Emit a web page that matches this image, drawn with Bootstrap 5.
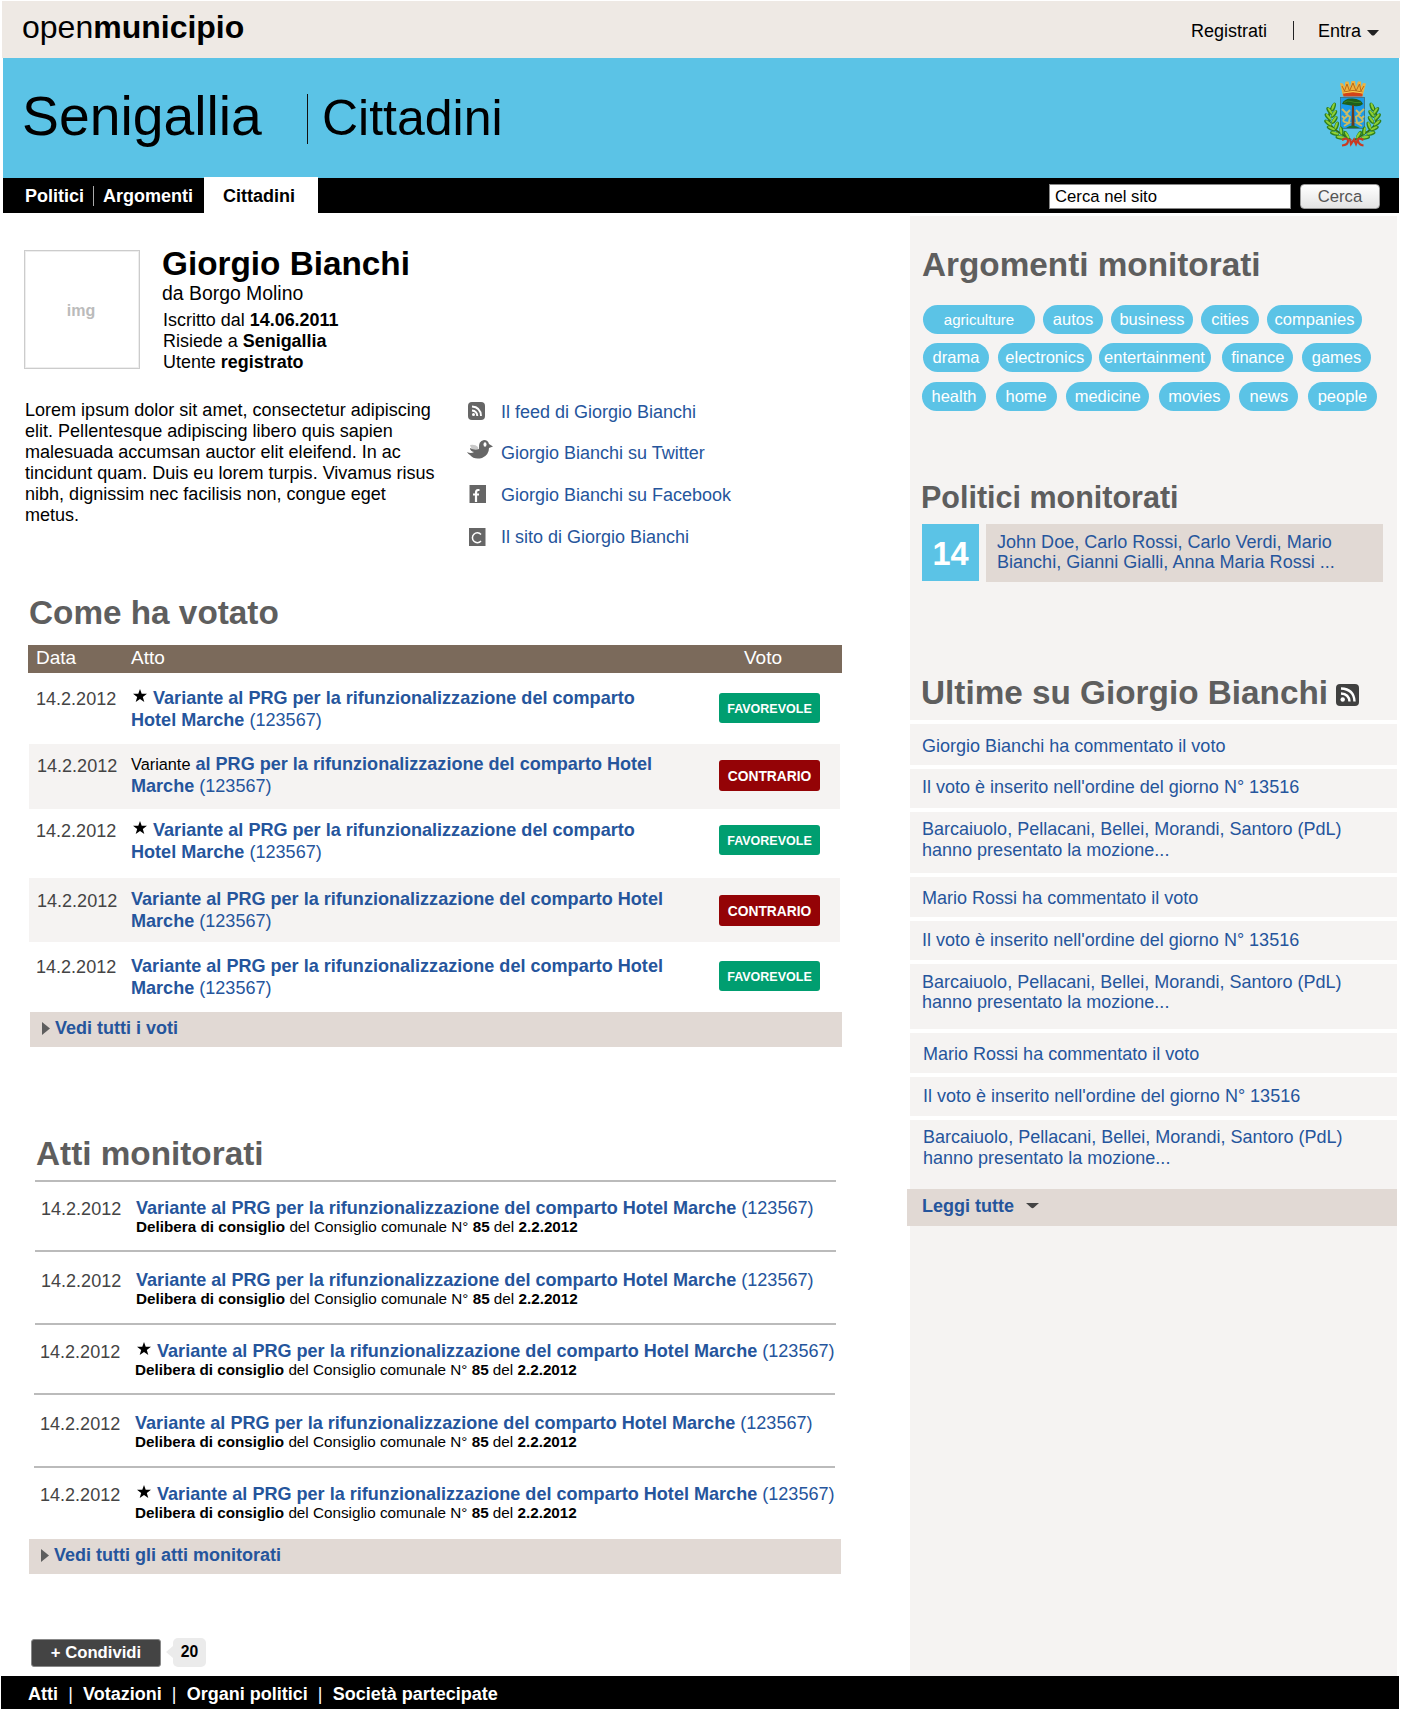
<!DOCTYPE html>
<html lang="it">
<head>
<meta charset="utf-8">
<meta name="viewport" content="width=device-width, initial-scale=1">
<title>openmunicipio - Senigallia - Giorgio Bianchi</title>
<link href="https://cdn.jsdelivr.net/npm/bootstrap@5.3.0/dist/css/bootstrap.min.css" rel="stylesheet">
<style>
  body { font-family: "Liberation Sans", Arial, sans-serif; font-size: 18px; line-height: 20px; color: #000; background: #fff; }
  a { color: #25559c; text-decoration: none; }
  svg { display: block; flex: none; }
  .om-page { width: 1412px; height: 1720px; padding-top: 1px; overflow: hidden; }
  .om-top { width: 1398px; height: 57px; margin-left: 2px; padding: 0 20px 0 20px; background: #eee9e4; }
  .om-logo { font-size: 32px; line-height: 36px; padding-top: 8px; color: #000; }
  .om-user { padding-top: 20px; }
  .om-user a { color: #000; }
  .om-user .om-sep { width: 1px; height: 19px; background: #222; margin: 0 24px 0 26px; }
  .om-user svg { margin: 9px 1px 0 6px; }
  .om-hero { width: 1396px; height: 120px; margin-left: 3px; padding: 0 16px 0 19px; background: #5bc3e6; }
  .om-city { font-size: 55.3px; line-height: 63px; width: 285px; padding-top: 27px; font-weight: 400; }
  .om-area { font-size: 50px; line-height: 56px; margin-top: 36px; height: 50px; padding-left: 14px; border-left: 1px solid #111; }
  .om-area span { display: block; margin-top: -4px; }
  .om-crest { margin-top: 22px; }
  .om-nav { width: 1396px; height: 35px; margin-left: 3px; padding: 0 19px 0 22px; background: #000; font-weight: 700; }
  .om-nav .om-link { color: #fff; padding-top: 8px; }
  .om-nav .om-vr { width: 1px; height: 20px; background: #aaa; margin: 8px 9px 0 9px; }
  .om-tab { width: 114px; height: 36px; margin: -1px 0 0 11px; padding: 9px 0 0 19px; background: #fff; color: #000; }
  .om-find { margin-top: 6px; gap: 9px; }
  .om-find .om-input { width: 242px; height: 25px; border: 1px solid #888; background: #fff; padding: 0 5px; font-size: 16.7px; border-radius: 0; color: #000; }
  .om-find .om-input::placeholder { color: #000; opacity: 1; }
  .om-find .om-go { width: 80px; height: 25px; padding: 0; border: 1px solid #999; border-radius: 4px; background: linear-gradient(#fff, #e3e3e3); color: #555; font-size: 16.7px; line-height: 23px; }
  .om-main { height: 1463px; }
  .om-left { width: 910px; flex: none; }
  .om-side { width: 487px; margin-top: 3px; padding: 30px 0 0 12px; background: #f5f3f2; }
  .om-title { font-size: 33.3px; line-height: 38px; font-weight: 700; color: #5e5e5e; margin: 0; white-space: nowrap; }

  .om-profile { height: 187px; padding: 37px 0 0 24px; }
  .om-avatar { width: 116px; height: 119px; border: 1px solid #ccc; outline: 1px solid #eee; outline-offset: -2px; color: #bbb; font-size: 16px; font-weight: 700; padding: 2px 2px 0 0; }
  .om-who { margin: -5px 0 0 22px; }
  .om-who h1 { font-size: 33.3px; line-height: 37px; font-weight: 700; margin: 0; }
  .om-from { font-size: 19.4px; line-height: 21px; margin-top: 1px; }
  .om-facts { font-size: 17.95px; line-height: 21px; margin-top: 6px; padding-left: 1px; }
  .om-about { height: 194px; padding-left: 25px; }
  .om-bio { width: 442px; font-size: 18.05px; line-height: 20.9px; white-space: nowrap; }
  .om-contacts { margin-top: -9px; }
  .om-contacts a { height: 41.7px; gap: 0; }
  .om-contacts a:nth-child(2) { padding-bottom: 1.5px; }
  .om-ico { width: 34px; flex: none; }

  .om-votes { padding-left: 28px; }
  .om-votes .om-title { height: 51px; padding-left: 1px; }
  .om-thead { width: 814px; height: 28px; background: #7b6a5b; color: #fff; font-size: 19px; line-height: 22px; padding: 2px 0 0 8px; }
  .om-thead :nth-child(1) { width: 95px; } .om-thead :nth-child(2) { width: 613px; }
  .om-vote { width: 811px; margin-left: 1px; height: var(--h); }
  .om-date { color: #444; flex: none; font-size: 18.05px; }
  .om-act { font-size: 18.07px; }
  .om-vote .om-date { width: 102px; padding: calc(var(--p) + 2px) 0 0 7px; }
  .om-vote .om-act { width: 588px; padding-top: var(--p); line-height: 22px; }
  .om-vote:nth-child(even) { background: #f5f3f2; }
  .om-vote:nth-child(even) .om-date { padding-left: 8px; padding-top: calc(var(--p) + 3px); }
  .om-vote:nth-child(1) { --h: 71px; --p: 14px; --b: 20px; }
  .om-vote:nth-child(2) { --h: 65px; --p: 9px; --b: 16px; }
  .om-vote:nth-child(3) { --h: 69px; --p: 10px; --b: 16px; }
  .om-vote:nth-child(4) { --h: 64px; --p: 10px; --b: 17px; }
  .om-vote:nth-child(5) { --h: 70px; --p: 13px; --b: 19px; }
  .om-plain { font-size: 16.3px; color: #000; }
  .om-star { display: inline-block; vertical-align: 2px; margin: 0 6px 0 2px; }
  .om-yes, .om-no { width: 101px; height: 30px; margin-top: var(--b); border-radius: 3px; color: #fff; font-weight: 700; text-align: center; white-space: nowrap; }
  .om-yes { background: #009e70; font-size: 12.5px; line-height: 32px; }
  .om-no { background: #940306; font-size: 13.8px; line-height: 33px; height: 31px; }
  .om-more { width: 812px; height: 35px; background: #e1d9d4; font-weight: 700; padding: 0 0 3px 12px; gap: 5px; }
  .om-votes .om-more { margin-left: 2px; }

  .om-acts { padding: 88px 0 0 29px; }
  .om-acts .om-title { height: 45px; padding-left: 7px; }
  .om-item { width: 801px; margin-left: 6px; border-top: 2px solid #bbb; height: var(--h); padding-top: var(--p); }
  .om-item:nth-child(1) { --h: 70px; --p: 15px; }
  .om-item:nth-child(2) { --h: 73px; --p: 17px; }
  .om-item:nth-child(3) { --h: 70px; --p: 15px; }
  .om-item:nth-child(4) { --h: 73px; --p: 17px; }
  .om-item:nth-child(5) { --h: 73px; --p: 15px; }
  .om-item:nth-child(n+4) { margin-left: 5px; }
  .om-item .om-date { width: 101px; padding: 2px 0 0 6px; }
  .om-item:nth-child(3) .om-date { width: 100px; padding-left: 5px; }
  .om-item .om-act { line-height: 22px; white-space: nowrap; }
  .om-sub { font-size: 15.25px; line-height: 15px; color: #000; }
  .om-share { padding: 65px 0 0 31px; }
  .om-sharebtn { width: 130px; height: 28px; border: 1px solid #888; border-radius: 3px; background: #444; color: #fff; font-size: 16.7px; line-height: 26px; font-weight: 700; padding: 0; }
  .om-arrow { margin: 7px 0 0 5px; }
  .om-count { width: 33px; height: 29px; margin-top: -1px; border-radius: 5px; background: #ebebeb; font-size: 15.7px; line-height: 28px; font-weight: 700; text-align: center; }
  .om-foot { width: 1398px; height: 33px; margin-left: 1px; padding: 0 0 0 27px; background: #000; color: #fff; font-weight: 700; line-height: 37px; white-space: nowrap; }
  .om-foot a { color: #fff; }
  .om-foot i { font-style: normal; font-weight: 400; width: 25px; text-align: center; }

  .om-tags { margin-top: 21px; margin-left: 1px; }
  .om-tagrow { height: 29px; }
  .om-tagrow span { height: 29px; border-radius: 15px; background: #5bc3e6; color: #fff; font-size: 16.5px; line-height: 29px; text-align: center; white-space: nowrap; }
  .om-t1 { width: 439px; margin-bottom: 9px; } .om-t2 { width: 448px; margin-bottom: 10px; } .om-t3 { width: 455px; margin-left: -1px; }
  .om-t1 span:nth-child(1) { width: 112px; font-size: 15.1px; } .om-t1 span:nth-child(2) { width: 60px; } .om-t1 span:nth-child(3) { width: 82px; } .om-t1 span:nth-child(4) { width: 58px; } .om-t1 span:nth-child(5) { width: 95px; }
  .om-t2 span:nth-child(1) { width: 66px; } .om-t2 span:nth-child(2) { width: 94px; } .om-t2 span:nth-child(3) { width: 112px; margin: 0 3px 0 -2px; } .om-t2 span:nth-child(4) { width: 71px; } .om-t2 span:nth-child(5) { width: 69px; }
  .om-t3 span:nth-child(1) { width: 64px; } .om-t3 span:nth-child(2) { width: 61px; } .om-t3 span:nth-child(3) { width: 83px; } .om-t3 span:nth-child(4) { width: 71px; } .om-t3 span:nth-child(5) { width: 59px; } .om-t3 span:nth-child(6) { width: 69px; }
  .om-small { font-size: 30.5px; line-height: 34px; margin: 69px 0 10px -1px; }
  .om-num { width: 57px; height: 57px; background: #5bc3e6; color: #fff; font-size: 32.5px; line-height: 60px; font-weight: 700; text-align: center; }
  .om-names { width: 397px; height: 58px; margin-left: 7px; padding: 8px 0 0 11px; background: #e1d9d4; white-space: nowrap; font-size: 18.05px; }
  .om-latest { margin-top: 92px; margin-left: -1px; height: 46px; gap: 8px; }
  .om-latest svg { margin-top: 10px; }
  .om-news { margin-left: -12px; font-size: 18.03px; }
  .om-news a { display: block; height: var(--h); border-top: 4px solid #fff; padding: var(--p) 0 0 12px; white-space: nowrap; }
  .om-news a:nth-child(n+7) { padding-left: 13px; }
  .om-news a:nth-child(1) { --h: 45px; --p: 12px; } .om-news a:nth-child(2) { --h: 43px; --p: 8px; }
  .om-news a:nth-child(3) { --h: 65px; --p: 7px; line-height: 21px; } .om-news a:nth-child(4) { --h: 44px; --p: 11px; }
  .om-news a:nth-child(5) { --h: 43px; --p: 9px; } .om-news a:nth-child(6) { --h: 69px; --p: 8px; }
  .om-news a:nth-child(7) { --h: 44px; --p: 11px; } .om-news a:nth-child(8) { --h: 43px; --p: 9px; }
  .om-news a:nth-child(9) { --h: 73px; --p: 7px; line-height: 21px; }
  .om-all { margin-left: -15px; width: 490px; height: 37px; background: #e1d9d4; font-weight: 700; padding: 0 0 4px 15px; gap: 12px; }
</style>
</head>
<body>
<svg width="0" height="0" class="position-absolute" aria-hidden="true">
  <symbol id="star" viewBox="0 0 14 13"><path d="M7 0 8.7 4.7 14 4.8 9.8 8 11.3 13 7 10.1 2.7 13 4.2 8 0 4.8 5.3 4.7Z"/></symbol>
  <symbol id="leaf" viewBox="-6 -3 12 6" overflow="visible"><ellipse rx="4.6" ry="2" fill="#2f7f1c"/><ellipse cx=".3" cy="-.5" rx="3.800" ry="1.100" fill="#8fd034"/></symbol>
</svg>
<div class="om-page">
  <header>
    <div class="om-top d-flex justify-content-between">
      <a class="om-logo" href="#">open<b>municipio</b></a>
      <div class="om-user d-flex">
        <a href="#">Registrati</a><span class="om-sep"></span><a href="#">Entra</a>
        <svg width="12" height="6"><path d="M0 0H12L7.5 5Q6 6 4.500 5Z" fill="#222"/></svg>
      </div>
    </div>
    <div class="om-hero d-flex">
      <div class="om-city">Senigallia</div>
      <div class="om-area"><span>Cittadini</span></div>
      <svg class="om-crest ms-auto" width="60" height="68" viewBox="0 0 60 68">
        <path d="M20 16 17 3 20 3.500 21.500 7 22.500 1.500H25.500L27 7 28.500 1H32L33 7 35 1.500H38L38.500 7 40 3 43 3.500 39.500 16Z" fill="#eeb23f"/>
        <path d="M19 6 21.500 11 24 4 26.500 11 30 3 33 11 36.500 4 38 11 41 6M20.500 12Q30 9 39.500 12" fill="none" stroke="#b96a18" stroke-width="1"/>
        <path d="M20 13.500Q30 11 39.500 13.500V16.500H20.500Z" fill="#d2441a"/><path d="M20.500 13Q30 10 39.500 13" fill="none" stroke="#ffd855" stroke-width=".8"/>
        <rect x="17.500" y="17.500" width="24" height="31" fill="#1a9be8" stroke="#3d6d7d" stroke-width=".8"/>
        <path d="M19 24Q21 18 29.500 18.500T40 24Q37 27 31 26T19 24Z" fill="#1d5f1c"/>
        <path d="M21 22.500Q25 20 28 21.500T38 22.500" fill="none" stroke="#3f8f28" stroke-width=".8"/>
        <path d="M29 25H31L31.500 46H28.500Z" fill="#6b3a1a"/>
        <path d="M23 48Q29 43 37 48Z" fill="#237129"/>
        <g fill="none" stroke="#cdbb62" stroke-width="1.900"><path d="M19 29 22 32Q27 34 22 38T26 43L21 46M27 30 23 34 27 37 26 42M19 36 22 39"/><path d="M41 29 38 32Q33 34 38 38T34 43L39 46M33 30 37 34 33 37 34 42M41 36 38 39"/></g>
        <g id="branch">
          <path d="M10 25Q0 42 14 51T28 60" fill="none" stroke="#326c14" stroke-width="2"/>
          <g transform="translate(10.500 27) rotate(-70)"><use href="#leaf" x="-6" y="-3" width="12" height="6"/></g>
          <g transform="translate(6.500 31) rotate(55)"><use href="#leaf" x="-6" y="-3" width="12" height="6"/></g>
          <g transform="translate(11 34) rotate(-55)"><use href="#leaf" x="-6" y="-3" width="12" height="6"/></g>
          <g transform="translate(5 37) rotate(50)"><use href="#leaf" x="-6" y="-3" width="12" height="6"/></g>
          <g transform="translate(11.500 40) rotate(-55)"><use href="#leaf" x="-6" y="-3" width="12" height="6"/></g>
          <g transform="translate(5 43) rotate(40)"><use href="#leaf" x="-6" y="-3" width="12" height="6"/></g>
          <g transform="translate(13.500 46) rotate(-70)"><use href="#leaf" x="-6" y="-3" width="12" height="6"/></g>
          <g transform="translate(8 48.500) rotate(25)"><use href="#leaf" x="-6" y="-3" width="12" height="6"/></g>
          <g transform="translate(18.500 51) rotate(-100)"><use href="#leaf" x="-6" y="-3" width="12" height="6"/></g>
          <g transform="translate(11.500 53.500) rotate(15)"><use href="#leaf" x="-6" y="-3" width="12" height="6"/></g>
          <g transform="translate(23.500 55) rotate(60)"><use href="#leaf" x="-6" y="-3" width="12" height="6"/></g>
          <g transform="translate(17 57.500) rotate(10)"><use href="#leaf" x="-6" y="-3" width="12" height="6"/></g>
        </g>
        <use href="#branch" transform="matrix(-1 0 0 1 59.500 0)"/>
        <path d="M19 60Q25 57 25 61T19 65.500M27 59 28 64 31 59.500 33 64 35 59M40.500 60Q34 57 35 61T40.500 65.500" fill="none" stroke="#c93a22" stroke-width="2.200"/>
      </svg>
    </div>
    <nav class="om-nav d-flex">
      <a class="om-link" href="#">Politici</a><span class="om-vr"></span><a class="om-link" href="#">Argomenti</a>
      <a class="om-tab" href="#">Cittadini</a>
      <form class="om-find d-flex ms-auto"><input class="om-input" type="text" placeholder="Cerca nel sito"><button class="om-go btn" type="button">Cerca</button></form>
    </nav>
  </header>

  <main class="om-main d-flex">
    <div class="om-left">
      <section class="om-profile d-flex">
        <div class="om-avatar d-flex align-items-center justify-content-center">img</div>
        <div class="om-who">
          <h1>Giorgio Bianchi</h1>
          <div class="om-from">da Borgo Molino</div>
          <div class="om-facts">Iscritto dal <b>14.06.2011</b><br>Risiede a <b>Senigallia</b><br>Utente <b>registrato</b></div>
        </div>
      </section>
      <section class="om-about d-flex">
        <div class="om-bio">Lorem ipsum dolor sit amet, consectetur adipiscing<br>elit. Pellentesque adipiscing libero quis sapien<br>malesuada accumsan auctor elit eleifend. In ac<br>tincidunt quam. Duis eu lorem turpis. Vivamus risus<br>nibh, dignissim nec facilisis non, congue eget<br>metus.</div>
        <div class="om-contacts">
          <a class="d-flex align-items-center" href="#"><span class="om-ico"><svg width="27" height="19" viewBox="0 0 27 19"><rect x="1" width="17" height="18" rx="4" fill="#666"/><g fill="none" stroke="#fff" stroke-width="1.900"><path d="M5 4.500Q13.500 5 14 14M5 8.500Q10 9 10.300 14"/></g><circle cx="6.500" cy="12.500" r="1.500" fill="#fff"/></svg></span>Il feed di Giorgio Bianchi</a>
          <a class="d-flex align-items-center" href="#"><span class="om-ico"><svg width="27" height="30" viewBox="0 0 27 30"><path d="M3 7Q8 6 11 9L12 13H8Q4 11 3 7Z" fill="#c9c9c9"/><path d="M0 14Q4 16 7 14Q3 13 3 10Q8 13 12 11Q11 3 17 2Q21 2 22 6L26 8.500 22 10Q22 17 15 20Q7 22 3 17Q1 16 0 14Z" fill="#666"/><ellipse cx="18" cy="6.500" rx="1.500" ry="2.200" fill="#fff"/></svg></span>Giorgio Bianchi su Twitter</a>
          <a class="d-flex align-items-center" href="#"><span class="om-ico"><svg width="27" height="20"><rect x="2.500" width="16.500" height="18" fill="#666"/><path d="M12.500 5H11Q9 5 9 8V17M6 9.500H12" fill="none" stroke="#fff" stroke-width="2.200"/></svg></span>Giorgio Bianchi su Facebook</a>
          <a class="d-flex align-items-center" href="#"><span class="om-ico"><svg width="27" height="18"><rect x="2" width="16.500" height="18" fill="#666"/><path d="M14 6.500A4.900 4.900 0 1 0 14 13" fill="none" stroke="#fff" stroke-width="1.500"/></svg></span>Il sito di Giorgio Bianchi</a>
        </div>
      </section>

      <section class="om-votes">
        <h2 class="om-title">Come ha votato</h2>
        <div class="om-thead d-flex"><span>Data</span><span>Atto</span><span>Voto</span></div>
        <div>
          <div class="om-vote d-flex"><div class="om-date">14.2.2012</div><div class="om-act"><svg class="om-star" width="14" height="13"><use href="#star"/></svg><a href="#"><b>Variante al PRG per la rifunzionalizzazione del comparto<br>Hotel Marche</b> (123567)</a></div><div class="om-yes">FAVOREVOLE</div></div>
          <div class="om-vote d-flex"><div class="om-date">14.2.2012</div><div class="om-act"><span class="om-plain">Variante</span> <a href="#"><b>al PRG per la rifunzionalizzazione del comparto Hotel<br>Marche</b> (123567)</a></div><div class="om-no">CONTRARIO</div></div>
          <div class="om-vote d-flex"><div class="om-date">14.2.2012</div><div class="om-act"><svg class="om-star" width="14" height="13"><use href="#star"/></svg><a href="#"><b>Variante al PRG per la rifunzionalizzazione del comparto<br>Hotel Marche</b> (123567)</a></div><div class="om-yes">FAVOREVOLE</div></div>
          <div class="om-vote d-flex"><div class="om-date">14.2.2012</div><div class="om-act"><a href="#"><b>Variante al PRG per la rifunzionalizzazione del comparto Hotel<br>Marche</b> (123567)</a></div><div class="om-no">CONTRARIO</div></div>
          <div class="om-vote d-flex"><div class="om-date">14.2.2012</div><div class="om-act"><a href="#"><b>Variante al PRG per la rifunzionalizzazione del comparto Hotel<br>Marche</b> (123567)</a></div><div class="om-yes">FAVOREVOLE</div></div>
        </div>
        <a class="om-more d-flex align-items-center" href="#"><svg width="8" height="13"><path d="M0 0 8 6.500 0 13Z" fill="#5e5e5e"/></svg>Vedi tutti i voti</a>
      </section>

      <section class="om-acts">
        <h2 class="om-title">Atti monitorati</h2>
        <div>
          <div class="om-item d-flex"><div class="om-date">14.2.2012</div><div class="om-act"><a href="#"><b>Variante al PRG per la rifunzionalizzazione del comparto Hotel Marche</b> (123567)</a><div class="om-sub"><b>Delibera di consiglio</b> del Consiglio comunale N° <b>85</b> del <b>2.2.2012</b></div></div></div>
          <div class="om-item d-flex"><div class="om-date">14.2.2012</div><div class="om-act"><a href="#"><b>Variante al PRG per la rifunzionalizzazione del comparto Hotel Marche</b> (123567)</a><div class="om-sub"><b>Delibera di consiglio</b> del Consiglio comunale N° <b>85</b> del <b>2.2.2012</b></div></div></div>
          <div class="om-item d-flex"><div class="om-date">14.2.2012</div><div class="om-act"><svg class="om-star" width="14" height="13"><use href="#star"/></svg><a href="#"><b>Variante al PRG per la rifunzionalizzazione del comparto Hotel Marche</b> (123567)</a><div class="om-sub"><b>Delibera di consiglio</b> del Consiglio comunale N° <b>85</b> del <b>2.2.2012</b></div></div></div>
          <div class="om-item d-flex"><div class="om-date">14.2.2012</div><div class="om-act"><a href="#"><b>Variante al PRG per la rifunzionalizzazione del comparto Hotel Marche</b> (123567)</a><div class="om-sub"><b>Delibera di consiglio</b> del Consiglio comunale N° <b>85</b> del <b>2.2.2012</b></div></div></div>
          <div class="om-item d-flex"><div class="om-date">14.2.2012</div><div class="om-act"><svg class="om-star" width="14" height="13"><use href="#star"/></svg><a href="#"><b>Variante al PRG per la rifunzionalizzazione del comparto Hotel Marche</b> (123567)</a><div class="om-sub"><b>Delibera di consiglio</b> del Consiglio comunale N° <b>85</b> del <b>2.2.2012</b></div></div></div>
        </div>
        <a class="om-more d-flex align-items-center" href="#"><svg width="8" height="13"><path d="M0 0 8 6.500 0 13Z" fill="#5e5e5e"/></svg>Vedi tutti gli atti monitorati</a>
      </section>

      <div class="om-share d-flex">
        <button class="om-sharebtn btn" type="button">+ Condividi</button>
        <svg class="om-arrow" width="7" height="12"><path d="M7 0V12L0 6Z" fill="#ebebeb"/></svg>
        <div class="om-count">20</div>
      </div>
    </div>

    <aside class="om-side">
      <h2 class="om-title">Argomenti monitorati</h2>
      <div class="om-tags">
        <div class="om-tagrow om-t1 d-flex justify-content-between"><span>agriculture</span><span>autos</span><span>business</span><span>cities</span><span>companies</span></div>
        <div class="om-tagrow om-t2 d-flex justify-content-between"><span>drama</span><span>electronics</span><span>entertainment</span><span>finance</span><span>games</span></div>
        <div class="om-tagrow om-t3 d-flex justify-content-between"><span>health</span><span>home</span><span>medicine</span><span>movies</span><span>news</span><span>people</span></div>
      </div>
      <h2 class="om-title om-small">Politici monitorati</h2>
      <div class="d-flex">
        <div class="om-num">14</div>
        <a class="om-names" href="#">John Doe, Carlo Rossi, Carlo Verdi, Mario<br>Bianchi, Gianni Gialli, Anna Maria Rossi ...</a>
      </div>
      <div class="om-latest d-flex"><h2 class="om-title">Ultime su Giorgio Bianchi</h2>
        <svg width="23" height="22" viewBox="0 0 23 22"><rect width="23" height="22" rx="4" fill="#404040"/><g fill="none" stroke="#fff" stroke-width="2.400"><path d="M5 4.500Q18 5 18.500 17.500M5 9.500Q13 10 13.500 17.500"/></g><circle cx="6.700" cy="15.500" r="2.200" fill="#fff"/></svg>
      </div>
      <div class="om-news">
        <a href="#">Giorgio Bianchi ha commentato il voto</a>
        <a href="#">Il voto è inserito nell'ordine del giorno N° 13516</a>
        <a href="#">Barcaiuolo, Pellacani, Bellei, Morandi, Santoro (PdL)<br>hanno presentato la mozione...</a>
        <a href="#">Mario Rossi ha commentato il voto</a>
        <a href="#">Il voto è inserito nell'ordine del giorno N° 13516</a>
        <a href="#">Barcaiuolo, Pellacani, Bellei, Morandi, Santoro (PdL)<br>hanno presentato la mozione...</a>
        <a href="#">Mario Rossi ha commentato il voto</a>
        <a href="#">Il voto è inserito nell'ordine del giorno N° 13516</a>
        <a href="#">Barcaiuolo, Pellacani, Bellei, Morandi, Santoro (PdL)<br>hanno presentato la mozione...</a>
      </div>
      <a class="om-all d-flex align-items-center" href="#">Leggi tutte <svg width="13" height="6"><path d="M0 0H13L8 4.500Q6.500 6 5 4.500Z" fill="#444"/></svg></a>
    </aside>
  </main>

  <footer class="om-foot d-flex"><a href="#">Atti</a><i>|</i><a href="#">Votazioni</a><i>|</i><a href="#">Organi politici</a><i>|</i><a href="#">Società partecipate</a></footer>
</div>
<script src="https://cdn.jsdelivr.net/npm/bootstrap@5.3.0/dist/js/bootstrap.bundle.min.js"></script>
</body>
</html>
